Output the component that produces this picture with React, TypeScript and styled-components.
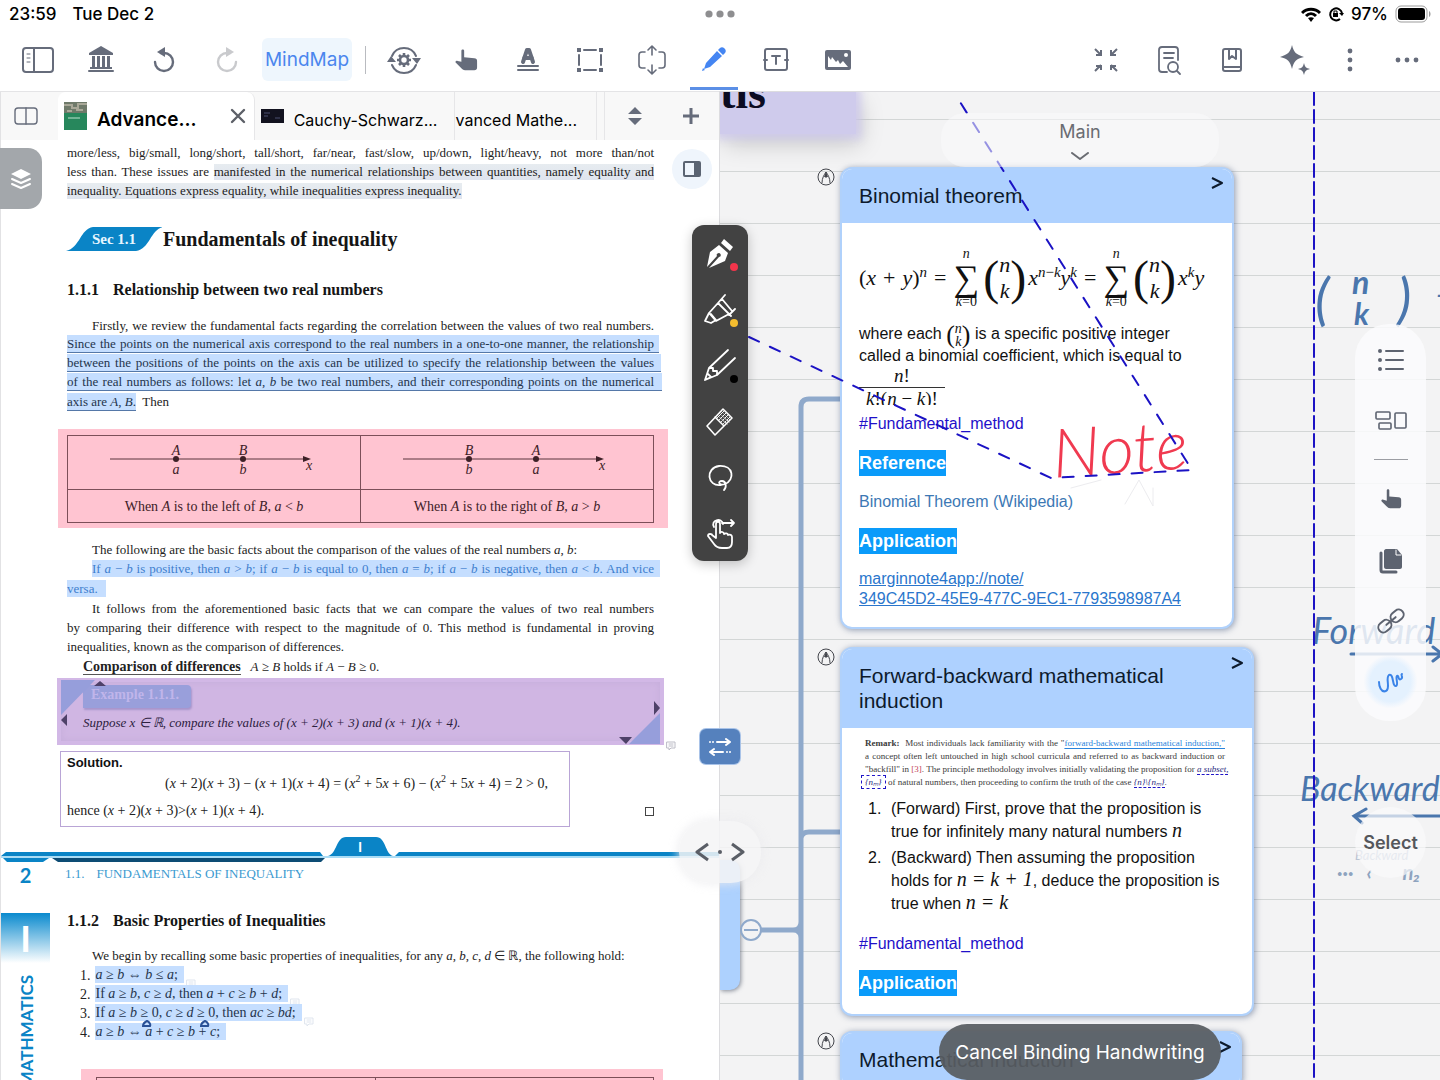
import React from "react";
import styled, { createGlobalStyle, css } from "styled-components";

const SANS = `Inter, "Liberation Sans", sans-serif`;
const HELV = `"Liberation Sans", Arial, sans-serif`;
const SERIF = `"Liberation Serif", "Times New Roman", serif`;
const HAND = `Lato, "Open Sans", sans-serif`;
const SLATE = "#666c7b";
const SKY = "#0a84c6";

const Global = createGlobalStyle`
  *, *::before, *::after { box-sizing: border-box; }
  body { margin: 0; background: #fff; font-family: ${SANS}; }
  button { border: 0; padding: 0; margin: 0; background: none; font: inherit; color: inherit; cursor: pointer; }
  p, h1, h2, h3, h4, ol { margin: 0; padding: 0; font-weight: inherit; font-size: inherit; }
  svg { display: block; }
`;

/* ---------- frame ---------- */

const Screen = styled.div`
  height: 100vh;
  display: flex;
  flex-direction: column;
  overflow: hidden;
  background: #fff;
`;

const StatusBar = styled.header`
  display: grid;
  grid-template-columns: 1fr auto 1fr;
  align-items: center;
  flex: none;
  height: 28px;
  padding: 0 9px;
  font-size: 17px;
  font-weight: 500;
  color: #000;
`;
const StatusSide = styled.div<{ $end?: boolean }>`
  display: flex;
  align-items: center;
  gap: ${(p) => (p.$end ? "7px" : "16px")};
  justify-content: ${(p) => (p.$end ? "flex-end" : "flex-start")};
`;

const Toolbar = styled.nav`
  display: flex;
  align-items: center;
  flex: none;
  height: 64px;
  padding-left: 6px;
  border-bottom: 1px solid #e4e4e6;
  color: ${SLATE};
`;
const ToolButton = styled.button<{ $w?: number; $active?: boolean; $muted?: boolean }>`
  display: grid;
  place-items: center;
  flex: none;
  width: ${(p) => p.$w ?? 62}px;
  height: 63px;
  color: ${(p) => (p.$active ? "#4485f2" : p.$muted ? "#c9cacd" : "inherit")};
  ${(p) =>
    p.$active &&
    css`
      background: linear-gradient(#5b8fe6, #5b8fe6) center bottom 1px / 48px 3px no-repeat;
    `}
`;
const ModeButton = styled.button`
  width: 90px;
  height: 43px;
  margin: 0 13px 0 4px;
  border-radius: 6px;
  background: #eef6fd;
  color: #4b86ee;
  font-size: 19px;
`;
const Divider = styled.span`
  width: 1px;
  height: 28px;
  margin-right: 7px;
  background: #b9bbc0;
`;
const ToolbarEnd = styled.div`
  display: flex;
  margin-left: auto;
`;

const Workspace = styled.main`
  position: relative;
  display: flex;
  flex: 1;
  min-height: 0;
`;

/* ---------- reader pane ---------- */

const Reader = styled.section`
  position: relative;
  flex: 1 1 0;
  min-width: 0;
  overflow: hidden;
  background: #fff;
  border-left: 1px solid #e2e2e4;
`;
const TabBar = styled.div`
  display: flex;
  height: 48px;
  background: #f8f8f8;
`;
const TabTool = styled.button<{ $w: number }>`
  display: grid;
  place-items: center;
  flex: none;
  width: ${(p) => p.$w}px;
  padding-right: 8px;
  color: ${SLATE};
`;
const Tab = styled.div<{ $active?: boolean; $w: number; $clip?: boolean }>`
  display: flex;
  align-items: center;
  flex: 0 1 ${(p) => p.$w}px;
  min-width: 0;
  gap: 10px;
  padding: 0 8px 0 6px;
  overflow: hidden;
  border-right: 1px solid #e6e6e8;
  background: ${(p) => (p.$active ? "#fff" : "transparent")};
  border-radius: ${(p) => (p.$active ? "8px 8px 0 0" : "0")};
  ${(p) => p.$clip && "justify-content: flex-end; padding-right: 19px;"}
`;
const TabTitle = styled.button<{ $active?: boolean }>`
  flex: none;
  padding-top: 8px;
  color: #000;
  white-space: nowrap;
  font-size: ${(p) => (p.$active ? 19 : 16)}px;
  line-height: 24px;
  font-weight: ${(p) => (p.$active ? 600 : 400)};
`;
const TabClose = styled.button`
  margin-left: auto;
  color: #5d6068;
`;
const TabEnd = styled.div`
  display: flex;
  margin-left: 7px;
  padding-left: 4px;
  border-left: 1px solid #e6e6e8;
`;

const Page = styled.article`
  padding: 3px 67px 0 66px;
  font-family: ${SERIF};
  font-size: 13px;
  line-height: 19px;
  color: #222;
`;
const Para = styled.p<{ $top?: number }>`
  margin-top: ${(p) => p.$top ?? 0}px;
`;
const Line = styled.span<{ $full?: boolean; $indent?: number }>`
  display: block;
  height: 19px;
  white-space: nowrap;
  padding-left: ${(p) => p.$indent ?? 0}px;
  text-align-last: ${(p) => (p.$full ? "justify" : "left")};
`;
const Mark = styled.span<{ $ink?: string; $rule?: boolean; $block?: boolean; $out?: number }>`
  display: ${(p) => (p.$block ? "block" : "inline-block")};
  height: 18px;
  line-height: 18px;
  margin-right: -${(p) => p.$out ?? 0}px;
  padding-right: ${(p) => p.$out ?? 0}px;
  background: #c5deff;
  color: ${(p) => p.$ink ?? "#24344c"};
  border-bottom: 1px solid ${(p) => (p.$rule ? "#5578a8" : "#fff")};
`;
const Soft = styled.span`
  background: linear-gradient(#e7ecf0, #dfe4ee);
  padding-bottom: 1px;
`;
const SectionHead = styled.h2`
  display: flex;
  align-items: center;
  gap: 1px;
  height: 24px;
  margin-top: 27px;
  font-size: 20px;
  font-weight: 700;
  color: #151515;
`;
const SectionBadge = styled.span`
  display: grid;
  place-items: center;
  width: 96px;
  height: 24px;
  margin-left: -1px;
  background: ${SKY};
  clip-path: path("M0 24 C14 21 14 2 27 0 H97 C84 3 84 22 70 24 Z");
  color: #e8f6ff;
  font-size: 15px;
`;
const SubHead = styled.h3<{ $top: number }>`
  display: flex;
  gap: 14px;
  margin-top: ${(p) => p.$top}px;
  font-size: 16px;
  line-height: 20px;
  font-weight: 700;
  color: #151515;
`;
const PinkBox = styled.div<{ $low?: boolean }>`
  margin: ${(p) => (p.$low ? "27px -9px 0 14px" : "18px -14px 0 -9px")};
  padding: ${(p) => (p.$low ? "8px 9px 0 15px" : "6px 14px 5px 9px")};
  background: #ffc4d1;
`;
const Figures = styled.table`
  width: 100%;
  border-collapse: collapse;
  table-layout: fixed;
  color: #3d2027;
  text-align: center;
  font-size: 14px;
  td {
    height: 33px;
    padding: 0;
    border: 1px solid #7c4f59;
  }
  tr:first-child td {
    height: 54px;
  }
  svg {
    margin: 0 auto;
  }
`;
const Underlined = styled.b`
  border-bottom: 1px solid #555;
  margin-right: 10px;
  font-size: 14px;
`;
const Example = styled.div`
  position: relative;
  height: 67px;
  margin: 2px -10px 0;
  padding: 7px 26px 0;
  background: #d0b6e3;
  box-shadow: inset 0 0 0 4px #d2b8e6, inset 0 0 6px 5px #c7afdc;
  color: #2c2140;
  font-style: italic;
`;
const ExampleTag = styled.h4`
  width: 108px;
  height: 23px;
  margin-bottom: 5px;
  padding-left: 8px;
  border-radius: 0 4px 4px 0;
  background: #999fdb;
  box-shadow: 1px 2px 2px #a795cc;
  color: #c0b5ea;
  font-style: normal;
  font-weight: 700;
  font-size: 14px;
  line-height: 20px;
`;
const Corner = styled.svg<{ $end?: boolean }>`
  position: absolute;
  ${(p) => (p.$end ? "right: 0; bottom: 0;" : "left: 0; top: 0;")}
`;
const NoteBadge = styled.span<{ $faint?: boolean }>`
  position: absolute;
  right: -12px;
  bottom: -6px;
  color: ${(p) => (p.$faint ? "#dfe5ee" : "#bcbcc6")};
`;
const SolutionRow = styled.div`
  display: flex;
  align-items: flex-end;
  justify-content: space-between;
  margin: 6px 0 0 -7px;
`;
const Solution = styled.div`
  width: 510px;
  height: 76px;
  padding: 1px 6px 0;
  border: 1px solid #b9a5d6;
  font-size: 14px;
`;
const SolutionTitle = styled.h4`
  font-family: ${HELV};
  font-weight: 700;
  font-size: 13px;
  line-height: 19px;
  color: #111;
`;
const Display = styled.p`
  margin-left: 98px;
  padding: 2px 0 8px;
`;
const Qed = styled.span`
  width: 9px;
  height: 9px;
  margin-bottom: 11px;
  border: 1px solid #444;
`;
const Sup = styled.sup`
  font-size: 10px;
  line-height: 0;
`;
const FootRule = styled.svg`
  margin: 8px 0 0 -66px;
`;

const NextPage = styled.article`
  display: flex;
  gap: 17px;
  padding-right: 67px;
  font-family: ${SERIF};
  font-size: 13px;
  line-height: 19px;
  color: #222;
`;
const Rail = styled.aside`
  flex: none;
  width: 49px;
  color: ${SKY};
  font-family: Lato, sans-serif;
  font-weight: 700;
`;
const PageNumber = styled.div`
  height: 50px;
  padding-top: 2px;
  text-align: center;
  font-size: 20px;
  line-height: 20px;
`;
const Chapter = styled.div`
  display: grid;
  place-items: center;
  height: 50px;
  background: linear-gradient(#0a8ace, #fff);
  color: #fff;
  font-size: 36px;
  line-height: 50px;
`;
const Subject = styled.div`
  display: flex;
  align-items: center;
  justify-content: flex-end;
  width: 49px;
  margin-top: 12px;
  padding-right: 2px;
  writing-mode: vertical-rl;
  transform: rotate(180deg);
  font-size: 17px;
  line-height: 45px;
`;
const NextBody = styled.div`
  flex: 1;
  min-width: 0;
`;
const RunningHead = styled.p`
  display: flex;
  gap: 12px;
  margin: 1px 0 0 -2px;
  font-size: 13px;
  color: #3a9ad0;
`;
const Props = styled.ol`
  list-style: none;
  margin: 1px 0 0 13px;
`;
const Prop = styled.li`
  display: flex;
  gap: 4px;
  height: 19px;
  white-space: nowrap;
  font-size: 14px;
`;
const PropMark = styled(Mark)`
  position: relative;
  padding: 0 6px 0 1px;
`;
const InkDrop = styled.svg<{ $x: number }>`
  position: absolute;
  left: ${(p) => p.$x}px;
  top: -3px;
`;

/* ---------- mind map pane ---------- */

const Canvas = styled.section`
  position: relative;
  flex: 1 1 0;
  min-width: 0;
  margin-left: -1px;
  overflow: hidden;
  background: linear-gradient(transparent 27px, #d3d6d6 27px, #d3d6d6 28px, transparent 28px) 0 0 / 100% 52px, #f3f3f4;
  box-shadow: 0 0 0 1px #dcdcdf;
`;
const Spot = styled.div<{ $x: number; $y: number; $w?: number }>`
  position: absolute;
  left: ${(p) => p.$x}px;
  top: ${(p) => p.$y}px;
  ${(p) => p.$w && `width: ${p.$w}px;`}
`;
const Layer = styled.svg`
  position: absolute;
  inset: 0;
  width: 100%;
  height: 100%;
  pointer-events: none;
`;
const RootNode = styled.div`
  width: 136px;
  height: 42px;
  background: #cfcbec;
  box-shadow: 0 0 8px 5px rgba(207, 203, 236, 0.9), 4px 10px 24px rgba(0, 0, 0, 0.18);
  font-family: ${SERIF};
  font-weight: 700;
  font-size: 46px;
  line-height: 1px;
  color: #0b0b22;
`;
const BlueNode = styled.div`
  width: 20px;
  height: 130px;
  border-radius: 0 10px 10px 0;
  background: #add1fe;
  box-shadow: 1px 1px 4px rgba(60, 70, 90, 0.6);
`;
const CardBox = styled.article`
  border: 2px solid #b0d1fb;
  border-radius: 12px;
  background: #fff;
  box-shadow: 1px 1px 6px rgba(60, 80, 120, 0.55);
  overflow: hidden;
  font-family: ${HELV};
  font-size: 16px;
  line-height: 22px;
  color: #111;
`;
const CardHead = styled.header`
  display: flex;
  justify-content: space-between;
  padding: 14px 8px 15px 17px;
  background: #aed1ff;
  color: #0d1a2c;
`;
const CardTitle = styled.h2`
  font-size: 21px;
  line-height: 25px;
`;
const CardOpen = styled.button`
  align-self: flex-start;
  margin: -7px 0 -4px;
`;
const CardBody = styled.div<{ $top: number; $bottom: number }>`
  padding: ${(p) => p.$top}px 17px ${(p) => p.$bottom}px;
`;
const M = styled.span`
  font-family: ${SERIF};
  font-style: italic;
  font-size: 20px;
  line-height: 20px;
`;
const Formula = styled.div`
  display: flex;
  align-items: center;
  height: 62px;
  margin-bottom: 14px;
  overflow: hidden;
  white-space: nowrap;
  font-family: ${SERIF};
  font-size: 22px;
  line-height: 24px;
`;
const Power = styled.sup`
  font-size: 15px;
  line-height: 0;
`;
const Op = styled.span`
  margin: 0 7px;
`;
const SumBox = styled.span`
  display: flex;
  flex-direction: column;
  align-items: center;
  font-size: 14px;
  line-height: 14px;
  span {
    font-size: 36px;
    line-height: 34px;
  }
`;
const Binom = styled.span<{ $small?: boolean }>`
  display: inline-flex;
  align-items: center;
  vertical-align: middle;
  height: ${(p) => (p.$small ? 20 : 60)}px;
  margin: ${(p) => (p.$small ? "0" : "0 2px 0 4px")};
  font-family: ${SERIF};
  font-size: ${(p) => (p.$small ? 26 : 48)}px;
  line-height: 1;
`;
const BinomStack = styled.i<{ $small?: boolean }>`
  display: flex;
  flex-direction: column;
  align-items: center;
  font-size: ${(p) => (p.$small ? 14 : 22)}px;
  line-height: ${(p) => (p.$small ? 13 : 26)}px;
`;
const Fraction = styled.div`
  display: flex;
  flex-direction: column;
  align-items: center;
  width: 86px;
  height: 38px;
  overflow: hidden;
  font-family: ${SERIF};
  font-size: 19px;
  line-height: 17px;
  span:first-child {
    width: 100%;
    padding-bottom: 3px;
    border-bottom: 1px solid #333;
    text-align: center;
  }
  span:last-child {
    line-height: 22px;
    white-space: nowrap;
  }
`;
const HashTag = styled.p<{ $top: number }>`
  margin-top: ${(p) => p.$top}px;
  color: #1f10c9;
`;
const Chip = styled.h3`
  width: fit-content;
  margin: 15px 0;
  height: 26px;
  background: #0a9bfa;
  color: #fff;
  font-size: 18px;
  line-height: 27px;
  font-weight: 700;
`;
const CardLink = styled.a<{ $plain?: boolean }>`
  display: block;
  width: fit-content;
  line-height: ${(p) => (p.$plain ? 22 : 20)}px;
  color: ${(p) => (p.$plain ? "#3c78b4" : "#2a76cc")};
  text-decoration: ${(p) => (p.$plain ? "none" : "underline")};
`;
const Excerpt = styled.div`
  margin: 0 10px 0 6px;
  font-family: ${SERIF};
  font-size: 9px;
  line-height: 13px;
  color: #3b3b3b;
  span {
    display: block;
    height: 13px;
    white-space: nowrap;
    text-align-last: justify;
  }
  span:last-child {
    text-align-last: left;
  }
  u {
    color: #2a84dc;
    text-underline-offset: 2px;
  }
  em {
    font-style: normal;
    color: #c2425a;
  }
`;
const Dashed = styled.i<{ $box?: boolean }>`
  color: #2b2a80;
  border: 0 dashed #2015c8;
  border-width: ${(p) => (p.$box ? "1px" : "0 0 1px")};
  padding: ${(p) => (p.$box ? "1px 3px" : "0")};
  margin-left: ${(p) => (p.$box ? "-4px" : "0")};
`;
const Steps = styled.ol`
  display: flex;
  flex-direction: column;
  gap: 4px;
  margin: 9px -8px 0 9px;
  list-style: none;
`;
const Step = styled.li`
  display: grid;
  grid-template-columns: 23px 1fr;
`;
const Ink = styled.span<{ $size: number; $color?: string; $bold?: boolean }>`
  display: block;
  white-space: nowrap;
  font-family: ${HAND};
  font-style: italic;
  font-weight: ${(p) => (p.$bold ? 700 : 400)};
  font-size: ${(p) => p.$size}px;
  line-height: ${(p) => p.$size}px;
  color: ${(p) => p.$color ?? "#4a76ad"};
`;
const RedInk = styled(Ink)`
  font-weight: 300;
  transform: rotate(-4deg);
`;

/* ---------- floating controls ---------- */

const BranchPill = styled.button`
  position: absolute;
  left: 75%;
  top: 21px;
  transform: translateX(-50%);
  display: flex;
  flex-direction: column;
  align-items: center;
  gap: 9px;
  width: 278px;
  height: 54px;
  padding-top: 8px;
  border-radius: 24px;
  background: rgba(250, 250, 251, 0.55);
  color: #6a6c72;
  font-size: 18px;
  line-height: 22px;
`;
const PenBar = styled.div`
  position: absolute;
  left: 50%;
  top: 133px;
  transform: translateX(-50%);
  width: 56px;
  border-radius: 12px;
  background: #424242;
  box-shadow: 0 3px 12px rgba(0, 0, 0, 0.22);
  color: #fff;
`;
const PenButton = styled.button<{ $dot?: string }>`
  position: relative;
  display: grid;
  place-items: center;
  width: 56px;
  height: 56px;
  &::after {
    content: "";
    position: absolute;
    left: 38px;
    top: 38px;
    width: 8px;
    height: 8px;
    border-radius: 50%;
    background: ${(p) => p.$dot ?? "transparent"};
  }
`;
const SwapButton = styled.button`
  position: absolute;
  left: 50%;
  top: 637px;
  transform: translateX(-50%);
  display: grid;
  place-items: center;
  width: 40px;
  height: 35px;
  border-radius: 6px;
  background: #5581bd;
  box-shadow: 0 0 0 1px #a9c3e8;
  color: #fff;
`;
const SplitHandle = styled.div`
  position: absolute;
  left: 50%;
  top: 729px;
  transform: translateX(-50%);
  display: flex;
  align-items: center;
  justify-content: center;
  gap: 9px;
  width: 82px;
  height: 62px;
  border-radius: 30px;
  background: rgba(245, 245, 246, 0.86);
  box-shadow: 0 0 8px 2px rgba(235, 235, 238, 0.7);
  color: #5a5e66;
`;
const PanelButton = styled.button`
  position: absolute;
  right: 9px;
  top: 57px;
  display: grid;
  place-items: center;
  width: 40px;
  height: 40px;
  border-radius: 50%;
  background: #eff5fc;
  color: #5b6472;
`;
const LayersButton = styled.button`
  position: absolute;
  left: 0;
  top: 56px;
  display: grid;
  place-items: center;
  width: 42px;
  height: 61px;
  border-radius: 0 14px 14px 0;
  background: #a3a7ab;
  color: #fff;
`;
const Palette = styled.div`
  position: absolute;
  right: 14px;
  top: 232px;
  display: flex;
  flex-direction: column;
  align-items: center;
  width: 71px;
  padding: 5px 0 9px;
  border-radius: 34px;
  background: rgba(252, 252, 253, 0.84);
  color: #5d6370;
  hr {
    width: 34px;
    margin: 8px 0;
    border: 0;
    border-top: 1px solid #9b9da3;
  }
`;
const PaletteButton = styled.button<{ $active?: boolean }>`
  display: grid;
  place-items: center;
  width: 61px;
  height: 61px;
  ${(p) =>
    p.$active &&
    css`
      color: #3b84e8;
      background: radial-gradient(circle, #e4f1fe 20px, transparent 27px);
    `}
`;
const SelectButton = styled.button`
  position: absolute;
  right: 14px;
  top: 715px;
  width: 71px;
  height: 71px;
  border-radius: 50%;
  background: rgba(250, 250, 251, 0.7);
  color: #55575c;
  font-size: 18px;
  font-weight: 600;
`;
const Toast = styled.button`
  position: absolute;
  left: 75%;
  bottom: 0;
  transform: translateX(-50%);
  width: 282px;
  height: 56px;
  border-radius: 28px;
  background: rgba(88, 92, 97, 0.93);
  color: #fff;
  font-size: 19px;
`;

/* ---------- icons ---------- */

type IconProps = { w?: number; h?: number; sw?: number; children: React.ReactNode };
const Icon = ({ w = 32, h = 32, sw = 2, children }: IconProps) => (
  <svg width={w} height={h} viewBox={`0 0 ${w} ${h}`} fill="none" stroke="currentColor" strokeWidth={sw} strokeLinecap="round" strokeLinejoin="round" aria-hidden="true">
    {children}
  </svg>
);
const solid = { fill: "currentColor", stroke: "none" };

const SidebarIcon = () => (
  <Icon><rect x="1" y="4" width="30" height="24" rx="3" /><path d="M12 4v24" /><path d="M5 10h3M5 14h3M5 18h3" strokeWidth="1" /></Icon>
);
const LibraryIcon = () => (
  <Icon><path {...solid} d="M16 2 28 9v2H4V9z" /><path {...solid} d="M7 12h3v11H7zM12 12h3v11h-3zM17 12h3v11h-3zM22 12h3v11h-3zM5 23h22v2H5z" /><path d="M4 27h24" /></Icon>
);
const UndoIcon = () => (
  <Icon><path d="M13 9h3a9 9 0 1 1-9 9" strokeWidth="2.4" /><path {...solid} d="m9 8 8-5v10z" /></Icon>
);
const RedoIcon = () => (
  <Icon><path d="M19 9h-3a9 9 0 1 0 9 9" strokeWidth="2.4" /><path {...solid} d="m23 8-8-5v10z" /></Icon>
);
const CycleIcon = () => (
  <Icon w={36}>
    <path d="M6 12A13 13 0 0 1 30 12M30 21A13 13 0 0 1 6 21" />
    <path {...solid} d="m1 18 4-6 5 6zM26 14h9l-4 6z" />
    <circle cx="18" cy="16" r="4" strokeWidth="2.6" />
    <path strokeWidth="2.6" strokeLinecap="butt" d="M18 9v3M18 20v3M11 16h3M22 16h3M13 11l2 2M21 19l2 2M23 11l-2 2M15 19l-2 2" />
  </Icon>
);
const HandIcon = ({ size = 26 }: { size?: number }) => (
  <svg width={size} height={size} viewBox="0 0 26 26" fill="currentColor" aria-hidden="true">
    <path d="M8 3c0-2 3-2 3 0v7l11 1c2 0 3 1 3 3v7c0 2-1 3-3 3H12c-2 0-3-1-4-2l-6-6c-1-1 0-3 2-2l4 1z" />
  </svg>
);
const TextMarkIcon = () => (
  <Icon><path strokeWidth="4" d="m11 18 4-12h2l4 12M12 14h8" /><path d="M6 22h20M6 26h20" /></Icon>
);
const FrameIcon = () => (
  <Icon><path d="M10 6h12M10 26h12M5 11v10M27 11v10" /><path {...solid} d="M3 4h4v4H3zM25 4h4v4h-4zM3 24h4v4H3zM25 24h4v4h-4z" /></Icon>
);
const ExpandIcon = () => (
  <Icon><path d="M9 8H6a3 3 0 0 0-3 3v10a3 3 0 0 0 3 3h3M23 8h3a3 3 0 0 1 3 3v10a3 3 0 0 1-3 3h-3M16 3v8M12 6l4-4 4 4M16 21v8M12 26l4 4 4-4" strokeWidth="1.6" /></Icon>
);
const PencilIcon = () => (
  <Icon><path {...solid} d="m8 19 11-12 5 5-12 11-6 2zM20 6l2-2c1-1 3-1 4 0l1 1c1 1 1 3 0 4l-2 2zM4 27l1-3 2 2z" /></Icon>
);
const TextBoxIcon = () => (
  <Icon><rect x="5" y="5" width="22" height="21" rx="2" /><path d="M12 12h8M16 12v8M4 16h3M25 16h3" /></Icon>
);
const ImageIcon = () => (
  <Icon><rect {...solid} x="3" y="6" width="26" height="20" rx="2" /><path fill="#fff" stroke="none" d="M6 23V12l3 4 1-3 4 5 2-2 2 4 3-3 5 6v0z" /><circle cx="24" cy="11" r="2" fill="#fff" stroke="none" /></Icon>
);
const CollapseIcon = () => (
  <Icon><path d="m5 5 6 6M11 6v5H6M27 5l-6 6M21 6v5h5M5 27l6-6M6 22h5v4M27 27l-6-6M26 22h-5v4" strokeLinecap="butt" strokeLinejoin="miter" strokeWidth="2" /></Icon>
);
const PageSearchIcon = () => (
  <Icon sw={1.8}><path d="M14 28H9a3 3 0 0 1-3-3V6a3 3 0 0 1 3-3h13a3 3 0 0 1 3 3v10M11 9h10M11 14h9" /><circle cx="20" cy="23" r="5" /><path d="m24 27 3 3" /></Icon>
);
const BookmarkIcon = () => (
  <Icon><rect x="7" y="5" width="18" height="22" rx="2" /><path d="M7 23h18M13 5v10l3-3 4 3V5" /></Icon>
);
const SparkleIcon = () => (
  <Icon><path {...solid} d="M13 1c2 8 4 9 12 12-8 2-10 4-12 12-2-8-4-10-12-12 8-3 10-4 12-12zM25 19c1 4 2 5 6 6-4 1-5 2-6 6-1-4-2-5-6-6 4-1 5-2 6-6z" /></Icon>
);
const DotsIcon = ({ vertical }: { vertical?: boolean }) => (
  <Icon w={28} h={28}>{[5, 14, 23].map((v) => <circle key={v} {...solid} cx={vertical ? 14 : v} cy={vertical ? v : 14} r="2.4" />)}</Icon>
);
const PenNibIcon = () => (
  <Icon><path {...solid} d="m20 2 9 8-3 4-9-8z" /><path {...solid} d="m15 8 9 8-3 8-16 7 10-11a2 2 0 1 0-2-1L3 30l3-15z" /></Icon>
);
const MarkerIcon = () => (
  <Icon sw={1.8}><path d="m21 2-7 8 13 13M31 16l-6 6M18 6l10 12M14 10 5 20l7 8 13-7M5 20l-4 8 6 2 5-3-5-6" /></Icon>
);
const DrawIcon = () => (
  <Icon sw={1.8}><path d="M24 1 5 19 1 31l12-5L31 9M5 19l4 0 0 3 4 0v4M1 31l6-3-3-3" /></Icon>
);
const EraserIcon = () => (
  <Icon sw={1.6}>
    <path d="m19 4 9 9-17 17-8-9zM11 12l9 9" />
    <path strokeWidth="1" strokeDasharray="1.5 1.5" d="m14 11 9 8M16 9l9 8M18 7l8 8M20 6l-7 7M22 8l-7 7M24 10l-7 7M26 12l-7 7" />
  </Icon>
);
const LassoIcon = () => (
  <Icon sw={1.8}><path d="M17 24C3 26 1 7 15 5c15-1 16 14 6 18-6 2-8-3-3-3 4 0 5 6 2 9" /></Icon>
);
const GestureIcon = () => (
  <Icon sw={1.8}><path d="M12 21V7c0-3 4-3 4 0v9c1-2 4-1 4 1 1-1 4-1 4 1 2-1 4 0 4 2v5c0 4-2 6-5 6h-5c-4 0-6-1-8-4l-6-8c0-3 4-2 4-1l4 3zM10 10c-4-7 8-10 9-3M18 6h12M27 3l3 3-3 3" /></Icon>
);
const OpenIcon = () => <Icon w={14} h={14}><path d="m2 2 10 5-10 5" strokeLinecap="butt" /></Icon>;
const PenBadge = () => (
  <svg width="20" height="20" viewBox="0 0 20 20" fill="none" stroke="#43454c" aria-hidden="true">
    <circle cx="10" cy="10" r="8" />
    <path d="M6 16c0-5 2-8 4-11 2 3 4 6 4 11M10 5v6" />
    <path fill="#43454c" stroke="none" d="m10 5 2 5h-4z" />
  </svg>
);
const CommentIcon = () => <Icon w={10} h={10} sw={1}><path d="M1 1h8v6H5L3 9V7H1zM3 3h4M3 5h4" /></Icon>;
const Drop = ({ x }: { x: number }) => (
  <InkDrop $x={x} width="12" height="9" viewBox="0 0 12 9" fill="none" stroke="#2a5196" strokeWidth="2" aria-hidden="true"><path d="M6 1c2 1 4 3 3 5H2c0-2 2-4 4-5z" /></InkDrop>
);

/* ---------- content parts ---------- */

const NumberLine = ({ left, right }: { left: string; right: string }) => (
  <svg width="212" height="50" viewBox="0 0 212 50" fontFamily="Liberation Serif" fontStyle="italic" fontSize="14" fill="#3d2027">
    <path d="M2 21h196" stroke="#5a343d" />
    <path d="m195 18 8 3-8 3z" />
    <circle cx="68" cy="21" r="3" />
    <circle cx="135" cy="21" r="3" />
    <g textAnchor="middle">
      <text x="68" y="17">{left}</text>
      <text x="135" y="17">{right}</text>
      <text x="68" y="36">{left.toLowerCase()}</text>
      <text x="135" y="36">{right.toLowerCase()}</text>
      <text x="201" y="32">x</text>
    </g>
  </svg>
);

const Sum = () => (
  <SumBox><i>n</i><span>∑</span><div><i>k</i>=0</div></SumBox>
);
const Choose = ({ small }: { small?: boolean }) => (
  <Binom $small={small}>(<BinomStack $small={small}><span>n</span><span>k</span></BinomStack>)</Binom>
);

const Card = ({ title, children }: { title: string; children?: React.ReactNode }) => (
  <CardBox>
    <CardHead>
      <CardTitle>{title}</CardTitle>
      <CardOpen aria-label={`Open ${title}`}><OpenIcon /></CardOpen>
    </CardHead>
    {children}
  </CardBox>
);

const TopBar = () => (
  <>
    <StatusBar>
      <StatusSide><span>23:59</span><span>Tue Dec 2</span></StatusSide>
      <svg width="30" height="8" viewBox="0 0 30 8" fill="#8e8e90" aria-hidden="true">
        <circle cx="4" cy="4" r="3.6" /><circle cx="15" cy="4" r="3.6" /><circle cx="26" cy="4" r="3.6" />
      </svg>
      <StatusSide $end>
        <svg width="20" height="15" viewBox="0 0 20 15" fill="none" stroke="#000" strokeWidth="3" aria-hidden="true">
          <path d="M1 6c5-5 13-5 18 0M5 9c3-3 7-3 10 0" /><path d="m10 15-3-4c2-1 4-1 6 0z" fill="#000" stroke="none" />
        </svg>
        <svg width="16" height="16" viewBox="0 0 16 16" fill="none" stroke="#000" strokeWidth="2" aria-hidden="true">
          <path d="M12 13A6 6 0 1 1 14 7" /><path d="M11 7h5l-2 3z" fill="#000" stroke="none" /><rect x="5" y="7" width="5" height="4" fill="#000" stroke="none" /><path d="M6 7V5h3v2" strokeWidth="1" />
        </svg>
        <span>97%</span>
        <svg width="36" height="18" viewBox="0 0 36 18" aria-hidden="true">
          <rect x="1" y="1" width="31" height="16" rx="5" fill="none" stroke="#9b9b9b" /><rect x="3" y="3" width="27" height="12" rx="3" /><path d="M34 6c2 1 2 5 0 6z" fill="#9b9b9b" />
        </svg>
      </StatusSide>
    </StatusBar>
    <Toolbar aria-label="Tools">
      <ToolButton $w={63} aria-label="Sidebar"><SidebarIcon /></ToolButton>
      <ToolButton $w={63} aria-label="Library"><LibraryIcon /></ToolButton>
      <ToolButton $w={63} aria-label="Undo"><UndoIcon /></ToolButton>
      <ToolButton $w={63} $muted aria-label="Redo"><RedoIcon /></ToolButton>
      <ModeButton>MindMap</ModeButton>
      <Divider />
      <ToolButton aria-label="Review"><CycleIcon /></ToolButton>
      <ToolButton aria-label="Select"><HandIcon size={24} /></ToolButton>
      <ToolButton aria-label="Highlight text"><TextMarkIcon /></ToolButton>
      <ToolButton aria-label="Frame"><FrameIcon /></ToolButton>
      <ToolButton aria-label="Insert space"><ExpandIcon /></ToolButton>
      <ToolButton $active aria-label="Draw"><PencilIcon /></ToolButton>
      <ToolButton aria-label="Text box"><TextBoxIcon /></ToolButton>
      <ToolButton aria-label="Image"><ImageIcon /></ToolButton>
      <ToolbarEnd>
        <ToolButton $w={63} aria-label="Collapse"><CollapseIcon /></ToolButton>
        <ToolButton $w={63} aria-label="Search page"><PageSearchIcon /></ToolButton>
        <ToolButton $w={63} aria-label="Bookmarks"><BookmarkIcon /></ToolButton>
        <ToolButton $w={63} aria-label="Assistant"><SparkleIcon /></ToolButton>
        <ToolButton $w={48} aria-label="Options"><DotsIcon vertical /></ToolButton>
        <ToolButton $w={66} aria-label="More"><DotsIcon /></ToolButton>
      </ToolbarEnd>
    </Toolbar>
  </>
);

const Tabs = () => (
  <TabBar role="tablist">
    <TabTool $w={57} aria-label="Split view">
      <Icon w={24} h={20}><rect x="1" y="2" width="22" height="16" rx="3" strokeWidth="1.4" /><path d="M12 2v16" strokeWidth="1.4" /></Icon>
    </TabTool>
    <Tab $active $w={197}>
      <svg width="23" height="28" viewBox="0 0 23 28" aria-hidden="true">
        <rect width="23" height="28" fill="#27875c" /><rect width="23" height="11" fill="#6f7a6a" /><path d="M0 3h8v3h6V2h9M3 9h5M12 8h7" stroke="#a9a898" strokeWidth="2" fill="none" /><path d="M4 16h12" stroke="#bfe3d0" />
      </svg>
      <TabTitle role="tab" aria-selected $active>Advance...</TabTitle>
      <TabClose aria-label="Close tab"><Icon w={16} h={16} sw={2.4}><path d="m2 2 12 12M14 2 2 14" /></Icon></TabClose>
    </Tab>
    <Tab $w={201}>
      <svg width="23" height="14" viewBox="0 0 23 14" aria-hidden="true"><rect width="23" height="14" fill="#12121f" /><path d="M3 4h6M3 7h4M14 9h5" stroke="#4b4f70" /></svg>
      <TabTitle role="tab">Cauchy-Schwarz...</TabTitle>
    </Tab>
    <Tab $w={142} $clip><TabTitle role="tab">Advanced Mathe...</TabTitle></Tab>
    <TabEnd>
      <TabTool $w={60} aria-label="Sort tabs"><Icon w={16} h={20}><path {...solid} d="m8 1 7 7H1zM1 12h14l-7 7z" /></Icon></TabTool>
      <TabTool $w={52} aria-label="New tab"><Icon w={18} h={18}><path d="M9 1v16M1 9h16" strokeWidth="3" strokeLinecap="butt" /></Icon></TabTool>
    </TabEnd>
  </TabBar>
);

const Document = () => (
  <>
    <Page>
      <Para>
        <Line $full>more/less, big/small, long/short, tall/short, far/near, fast/slow, up/down, light/heavy, not more than/not</Line>
        <Line $full>less than. These issues are <Soft>manifested in the numerical relationships between quantities, namely equality and</Soft></Line>
        <Line><Soft>inequality. Equations express equality, while inequalities express inequality.</Soft></Line>
      </Para>
      <SectionHead><SectionBadge>Sec 1.1</SectionBadge>Fundamentals of inequality</SectionHead>
      <SubHead $top={29}><span>1.1.1</span><span>Relationship between two real numbers</span></SubHead>
      <Para $top={16}>
        <Line $full $indent={25}>Firstly, we review the fundamental facts regarding the correlation between the values of two real numbers.</Line>
        <Line $full><Mark $block $rule $out={5}>Since the points on the numerical axis correspond to the real numbers in a one-to-one manner, the relationship</Mark></Line>
        <Line $full><Mark $block $rule $out={7}>between the positions of the points on the axis can be utilized to specify the relationship between the values</Mark></Line>
        <Line $full><Mark $block $rule $out={8}>of the real numbers as follows: let <i>a</i>, <i>b</i> be two real numbers, and their corresponding points on the numerical</Mark></Line>
        <Line><Mark $rule>axis are <i>A</i>, <i>B</i>.</Mark>&nbsp; Then</Line>
      </Para>
      <PinkBox>
        <Figures>
          <tbody>
            <tr><td><NumberLine left="A" right="B" /></td><td><NumberLine left="B" right="A" /></td></tr>
            <tr><td>When <i>A</i> is to the left of <i>B</i>, <i>a</i> &lt; <i>b</i></td><td>When <i>A</i> is to the right of <i>B</i>, <i>a</i> &gt; <i>b</i></td></tr>
          </tbody>
        </Figures>
      </PinkBox>
      <Para $top={12}><Line $indent={25}>The following are the basic facts about the comparison of the values of the real numbers <i>a</i>, <i>b</i>:</Line></Para>
      <Para $top={1}>
        <Line $full $indent={25}><Mark $block $out={6} $ink="#3f7fce">If <i>a</i> − <i>b</i> is positive, then <i>a</i> &gt; <i>b</i>; if <i>a</i> − <i>b</i> is equal to 0, then <i>a</i> = <i>b</i>; if <i>a</i> − <i>b</i> is negative, then <i>a</i> &lt; <i>b</i>. And vice</Mark></Line>
        <Line><Mark $out={8} $ink="#3f7fce">versa.</Mark></Line>
      </Para>
      <Para $top={1}>
        <Line $full $indent={25}>It follows from the aforementioned basic facts that we can compare the values of two real numbers</Line>
        <Line $full>by comparing their difference with respect to the magnitude of 0. This method is fundamental in proving</Line>
        <Line>inequalities, known as the comparison of differences.</Line>
      </Para>
      <Para $top={1}><Line $indent={16}><Underlined>Comparison of differences</Underlined><i>A</i> ≥ <i>B</i> holds if <i>A</i> − <i>B</i> ≥ 0.</Line></Para>
      <Example>
        <Corner width="52" height="52"><path d="M4 2h34L4 37z" fill="#969edb" /><path d="m37 8 6-5 6 5zM10 36v12l-6-6z" fill="#4e4168" /></Corner>
        <Corner $end width="52" height="48"><path d="M48 16v31H17z" fill="#969edb" /><path d="M42 4v14l6-7zM7 40h13l-6 7z" fill="#4e4168" /></Corner>
        <ExampleTag>Example 1.1.1.</ExampleTag>
        <p>Suppose x ∈ ℝ, compare the values of (x + 2)(x + 3) and (x + 1)(x + 4).</p>
        <NoteBadge><CommentIcon /></NoteBadge>
      </Example>
      <SolutionRow>
        <Solution>
          <SolutionTitle>Solution.</SolutionTitle>
          <Display>(<i>x</i> + 2)(<i>x</i> + 3) − (<i>x</i> + 1)(<i>x</i> + 4) = (<i>x</i><Sup>2</Sup> + 5<i>x</i> + 6) − (<i>x</i><Sup>2</Sup> + 5<i>x</i> + 4) = 2 &gt; 0,</Display>
          <p>hence (<i>x</i> + 2)(<i>x</i> + 3)&gt;(<i>x</i> + 1)(<i>x</i> + 4).</p>
        </Solution>
        <Qed />
      </SolutionRow>
      <FootRule width="718" height="28" viewBox="0 -1 718 28" aria-hidden="true">
        <path d="M5 16h314l3 4H0zM398 16h320v4H394z" fill={SKY} />
        <path d="M327 20c9-2 8-19 18-19h30c10 0 9 17 17 19z" fill={SKY} />
        <path d="M0 21h718" stroke="#a9dcf5" strokeWidth="2" />
        <path d="M2 22h46l-6 4H6z" fill={SKY} />
        <path d="M51 22h273l-4 4H57z" fill="#0d4c74" />
        <text x="359" y="16" textAnchor="middle" fill="#fff" fontFamily="Lato" fontWeight="700" fontSize="14">I</text>
      </FootRule>
    </Page>
    <NextPage>
      <Rail>
        <PageNumber>2</PageNumber>
        <Chapter>I</Chapter>
        <Subject>MATHMATICS</Subject>
      </Rail>
      <NextBody>
        <RunningHead><span>1.1.</span><span>FUNDAMENTALS OF INEQUALITY</span></RunningHead>
        <SubHead $top={28}><span>1.1.2</span><span>Basic Properties of Inequalities</span></SubHead>
        <Para $top={15}><Line $indent={25}>We begin by recalling some basic properties of inequalities, for any <i>a</i>, <i>b</i>, <i>c</i>, <i>d</i> ∈ ℝ, the following hold:</Line></Para>
        <Props>
          <Prop><span>1.</span><PropMark><i>a</i> ≥ <i>b</i> ⇔ <i>b</i> ≤ <i>a</i>;<NoteBadge $faint><CommentIcon /></NoteBadge></PropMark></Prop>
          <Prop><span>2.</span><PropMark>If <i>a</i> ≥ <i>b</i>, <i>c</i> ≥ <i>d</i>, then <i>a</i> + <i>c</i> ≥ <i>b</i> + <i>d</i>;<NoteBadge $faint><CommentIcon /></NoteBadge></PropMark></Prop>
          <Prop><span>3.</span><PropMark>If <i>a</i> ≥ <i>b</i> ≥ 0, <i>c</i> ≥ <i>d</i> ≥ 0, then <i>ac</i> ≥ <i>bd</i>;<NoteBadge $faint><CommentIcon /></NoteBadge></PropMark></Prop>
          <Prop><span>4.</span><PropMark><i>a</i> ≥ <i>b</i> ⇔ <i>a</i> + <i>c</i> ≥ <i>b</i> + <i>c</i>;<Drop x={46} /><Drop x={104} /></PropMark></Prop>
        </Props>
        <PinkBox $low>
          <Figures><tbody><tr><td /><td /></tr></tbody></Figures>
        </PinkBox>
      </NextBody>
    </NextPage>
  </>
);

const MindMap = () => (
  <Canvas aria-label="Mind map">
    <Spot $x={0} $y={0}><RootNode>tis</RootNode></Spot>
    <Spot $x={0} $y={768}><BlueNode /></Spot>
    <Layer fill="none" stroke="#8fa9cb" strokeWidth="5">
      <path d="M121 307H89q-8 0-8 8V988M121 740H89q-7 0-8 6M41 838h32q8 0 8-8M73 838q8 0 8 8" />
      <circle cx="31" cy="838" r="10" strokeWidth="2" fill="#f3f3f4" />
      <path d="M24 838h14" strokeWidth="2" />
    </Layer>
    <Spot $x={96} $y={75}><PenBadge /></Spot>
    <Spot $x={96} $y={555}><PenBadge /></Spot>
    <Spot $x={96} $y={939}><PenBadge /></Spot>

    <Spot $x={120} $y={75} $w={394}>
      <Card title="Binomial theorem">
        <CardBody $top={24} $bottom={18}>
          <Formula>
            <span>(<i>x</i><Op>+</Op><i>y</i>)<Power><i>n</i></Power><Op>=</Op></span>
            <Sum /><Choose />
            <span><i>x</i><Power><i>n</i>−<i>k</i></Power><i>y</i><Power><i>k</i></Power><Op>=</Op></span>
            <Sum /><Choose />
            <span><i>x</i><Power><i>k</i></Power><i>y</i></span>
          </Formula>
          <p>where each <Choose small /> is a specific positive integer called a binomial coefficient, which is equal to</p>
          <Fraction><span><i>n</i>!</span><span><i>k</i>!(<i>n</i> − <i>k</i>)!</span></Fraction>
          <HashTag $top={8}>#Fundamental_method</HashTag>
          <Chip>Reference</Chip>
          <CardLink $plain href="#wikipedia">Binomial Theorem (Wikipedia)</CardLink>
          <Chip>Application</Chip>
          <CardLink href="#note">marginnote4app://note/<br />349C45D2-45E9-477C-9EC1-7793598987A4</CardLink>
        </CardBody>
      </Card>
    </Spot>

    <Spot $x={120} $y={555} $w={414}>
      <Card title="Forward-backward mathematical induction">
        <CardBody $top={9} $bottom={3}>
          <Excerpt>
            <span><b>Remark:</b>&nbsp; Most individuals lack familiarity with the "<u>forward-backward mathematical induction,"</u></span>
            <span>a concept often left untouched in high school curricula and referred to as backward induction or</span>
            <span>"backfill" in <em>[3]</em>. The principle methodology involves initially validating the proposition for <Dashed>a subset,</Dashed></span>
            <span><Dashed $box>{"{nₘ}"}</Dashed> of natural numbers, then proceeding to confirm the truth of the case <Dashed>{"{n}\\{nₘ}"}</Dashed>.</span>
          </Excerpt>
          <Steps>
            <Step><span>1.</span><span>(Forward) First, prove that the proposition is<br />true for infinitely many natural numbers <M>n</M></span></Step>
            <Step><span>2.</span><span>(Backward) Then assuming the proposition<br />holds for <M>n = k + 1</M>, deduce the proposition is<br />true when <M>n = k</M></span></Step>
          </Steps>
          <HashTag $top={18}>#Fundamental_method</HashTag>
          <Chip>Application</Chip>
        </CardBody>
      </Card>
    </Spot>

    <Spot $x={120} $y={939} $w={402}><Card title="Mathematical induction" /></Spot>

    <Spot $x={595} $y={178}><Ink $size={56}>(</Ink></Spot>
    <Spot $x={632} $y={174}><Ink $size={32} $bold>n</Ink></Spot>
    <Spot $x={634} $y={206}><Ink $size={30} $bold>k</Ink></Spot>
    <Spot $x={677} $y={178}><Ink $size={56}>)</Ink></Spot>
    <Spot $x={716} $y={186}><Ink $size={30}>-</Ink></Spot>
    <Spot $x={592} $y={520}><Ink $size={36}>Forward</Ink></Spot>
    <Spot $x={580} $y={679}><Ink $size={34}>Backward</Ink></Spot>
    <Spot $x={635} $y={757}><Ink $size={13} $color="#b9c4d4">Backward</Ink></Spot>
    <Spot $x={617} $y={770}><Ink $size={20} $color="#8ea3bf" $bold>···&nbsp;&nbsp; ‹ &nbsp; &nbsp; &nbsp; n₂</Ink></Spot>
    <Spot $x={332} $y={321}><RedInk $size={68} $color="#f03a50">Note</RedInk></Spot>
    <Layer fill="none" strokeLinecap="round">
      <path d="M631 562h88M713 555l9 7-9 7M722 724h-88M646 717l-12 7 8 7" stroke="#4a76ad" strokeWidth="3" />
      <path d="m405 412 14-24 14 26v-18M351 396l30-8" stroke="#ececef" strokeWidth="1" />
      <path d="M29 245 331 386 472 378 235 2" stroke="#1b12c4" strokeWidth="2" strokeDasharray="11 12" />
      <path d="M594 0v988" stroke="#1b12c4" strokeWidth="2" strokeDasharray="13 5" />
    </Layer>
  </Canvas>
);

const FloatingControls = () => (
  <>
    <LayersButton aria-label="Layers">
      <Icon w={22} h={24}><path {...solid} d="m11 2 10 5-10 5L1 7z" /><path d="m2 12 9 4 9-4M2 17l9 4 9-4" /></Icon>
    </LayersButton>
    <BranchPill>Main<Icon w={18} h={10}><path d="m1 1 8 6 8-6" /></Icon></BranchPill>
    <PenBar role="toolbar" aria-label="Pens">
      <PenButton $dot="#f2354b" aria-label="Fountain pen"><PenNibIcon /></PenButton>
      <PenButton $dot="#f4bd2f" aria-label="Highlighter"><MarkerIcon /></PenButton>
      <PenButton $dot="#000" aria-label="Pencil"><DrawIcon /></PenButton>
      <PenButton aria-label="Eraser"><EraserIcon /></PenButton>
      <PenButton aria-label="Lasso"><LassoIcon /></PenButton>
      <PenButton aria-label="Gesture"><GestureIcon /></PenButton>
    </PenBar>
    <SwapButton aria-label="Swap panes">
      <Icon w={24} h={18}><path d="M9 4h12M18 1l4 3-4 3M15 14H3M6 11l-4 3 4 3" /><path d="M2 4h0M5 4h0M19 14h0M22 14h0" /></Icon>
    </SwapButton>
    <SplitHandle>
      <button aria-label="Shrink reader"><Icon w={14} h={20} sw={3}><path d="M13 2 2 10l11 8" strokeLinecap="butt" /></Icon></button>
      <Icon w={4} h={4}><circle {...solid} cx="2" cy="2" r="2" /></Icon>
      <button aria-label="Grow reader"><Icon w={14} h={20} sw={3}><path d="m1 2 11 8-11 8" strokeLinecap="butt" /></Icon></button>
    </SplitHandle>
    <Palette role="toolbar" aria-label="Map tools">
      <PaletteButton aria-label="Outline"><Icon w={28} h={24}><path d="M9 3h17M9 12h17M9 21h17" /><path strokeWidth="4" d="M3 3h0M3 12h0M3 21h0" /></Icon></PaletteButton>
      <PaletteButton aria-label="Layout"><Icon w={32} h={22} sw={1.6}><rect x="1" y="2" width="14" height="7" rx="1" /><rect x="4" y="13" width="12" height="6" rx="1" /><rect x="20" y="3" width="11" height="15" rx="1" /></Icon></PaletteButton>
      <hr />
      <PaletteButton aria-label="Pick"><HandIcon size={22} /></PaletteButton>
      <PaletteButton aria-label="Copy"><Icon w={26} h={28}><path {...solid} d="M8 3h11l5 6v12c0 1-1 2-2 2H8c-1 0-2-1-2-2V5c0-1 1-2 2-2z" /><path d="M3 7v17a2 2 0 0 0 2 2h13" strokeWidth="3" /><path d="M18 4v5h5" stroke="#fff" strokeWidth="1" /></Icon></PaletteButton>
      <PaletteButton aria-label="Link"><Icon w={30} h={28}><g transform="rotate(-40 15 14)"><rect x="0" y="9" width="14" height="10" rx="5" /><rect x="16" y="9" width="14" height="10" rx="5" /><path d="M9 14h12" /></g></Icon></PaletteButton>
      <PaletteButton $active aria-label="Scribble"><Icon w={30} h={26}><path d="M3 13c0 4 2 11 7 9 5-3-1-13 3-16 5-2 3 12 7 11 3-1-1-9 1-10s1 5 4 3-1-4 1-5" /></Icon></PaletteButton>
    </Palette>
    <SelectButton>Select</SelectButton>
    <Toast>Cancel Binding Handwriting</Toast>
  </>
);

export default function App() {
  return (
    <Screen>
      <Global />
      <TopBar />
      <Workspace>
        <Reader>
          <Tabs />
          <Document />
          <PanelButton aria-label="Toggle side notes">
            <Icon w={18} h={18} sw={2}><rect x="1" y="2" width="16" height="14" rx="1" /><path {...solid} d="M11 2h6v14h-6z" /></Icon>
          </PanelButton>
        </Reader>
        <MindMap />
        <FloatingControls />
      </Workspace>
    </Screen>
  );
}
